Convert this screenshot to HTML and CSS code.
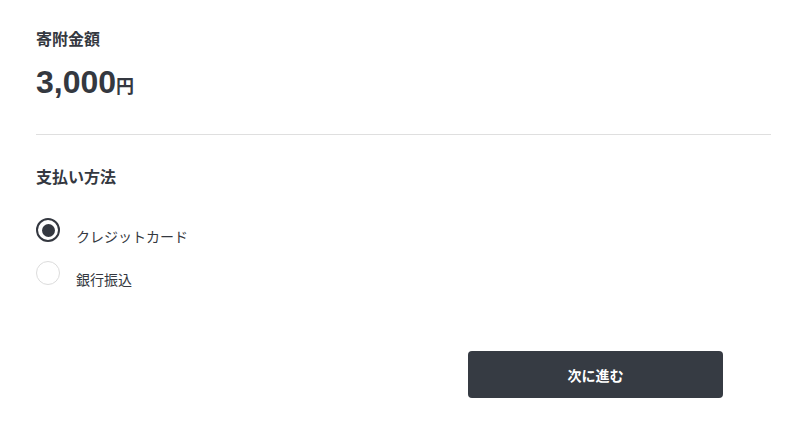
FILE: index.html
```html
<!DOCTYPE html>
<html lang="ja">
<head>
<meta charset="utf-8">
<link rel="stylesheet" href="styles.css">
</head>
<body>
<main class="page">
  <section class="amount-section">
    <h2 class="label-title">寄附金額</h2>
    <p class="amount">3,000<span class="yen">円</span></p>
  </section>
  <hr class="divider">
  <section class="pay-section">
    <h2 class="label-title">支払い方法</h2>
    <div class="radios">
      <label class="radio-row">
        <span class="radio checked"><span class="dot"></span></span>
        <span class="radio-label">クレジットカード</span>
      </label>
      <label class="radio-row">
        <span class="radio"></span>
        <span class="radio-label">銀行振込</span>
      </label>
    </div>
  </section>
  <div class="actions">
    <button class="next-btn">次に進む</button>
  </div>
</main>
</body>
</html>
```
FILE: styles.css
```css
* { box-sizing: border-box; }
html, body { margin: 0; padding: 0; background: #fff; }
body {
  font-family: "Liberation Sans", "Noto Sans CJK JP", sans-serif;
  color: #343840;
}
.page {
  padding: 26px 32px 0 36px;
}
.label-title {
  margin: 0;
  font-size: 16px;
  line-height: 24px;
  font-weight: 700;
  font-family: "Noto Sans CJK JP", sans-serif;
}
.amount {
  margin: 12px 0 0;
  font-size: 32px;
  line-height: 40px;
  height: 40px;
  font-weight: 700;
  letter-spacing: 0;
}
.yen {
  font-family: "Noto Sans CJK JP", sans-serif;
  font-size: 18px;
  line-height: 1;
  font-weight: 700;
}
.divider {
  margin: 32px 0 0;
  border: 0;
  height: 1px;
  background: #dfdfdf;
}
.pay-section {
  padding-top: 29px;
}
.radios {
  margin-top: 30px;
  display: flex;
  flex-direction: column;
  gap: 15px;
}
.radio-row {
  display: flex;
  align-items: flex-start;
  gap: 16px;
}
.radio {
  width: 24px;
  height: 24px;
  border-radius: 50%;
  border: 1px solid #dcdcdc;
  display: flex;
  align-items: center;
  justify-content: center;
  flex: none;
}
.radio.checked {
  border: 2px solid #343840;
}
.dot {
  width: 13px;
  height: 13px;
  border-radius: 50%;
  background: #343840;
}
.radio-label {
  margin-top: 8px;
  font-family: "Noto Sans CJK JP", sans-serif;
  font-size: 14px;
  line-height: 20px;
  color: #343840;
}
.actions {
  display: flex;
  justify-content: flex-end;
  padding-right: 48px;
  margin-top: 62px;
}
.next-btn {
  width: 255px;
  height: 47px;
  border: 0;
  border-radius: 4px;
  background: #363b43;
  color: #fff;
  font-family: "Noto Sans CJK JP", sans-serif;
  font-size: 14px;
  font-weight: 700;
  cursor: pointer;
}
```
